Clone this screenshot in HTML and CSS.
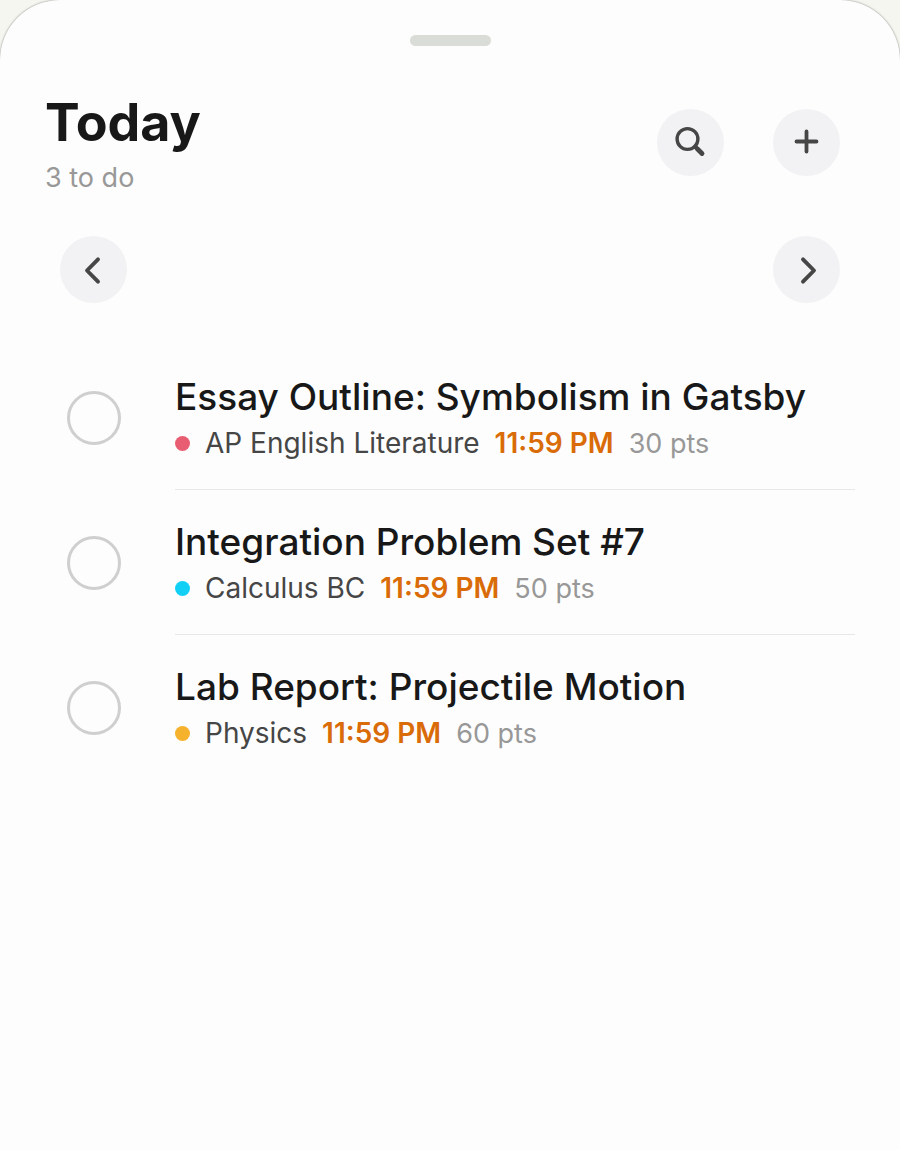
FILE: index.html
```html
<!DOCTYPE html>
<html lang="en">
<head>
    <meta charset="UTF-8">
    <meta name="viewport" content="width=device-width, initial-scale=1.0">
    <title>Today</title>
    <link rel="stylesheet" href="styles.css">
</head>
<body>
    <main class="sheet">
        <div class="grabber"></div>

        <header class="header">
            <div>
                <h1>Today</h1>
                <p class="subtitle">3 to do</p>
            </div>
            <div class="actions">
                <button type="button" class="round-button" aria-label="Search">
                    <svg width="32" height="32" viewBox="0 0 32 32">
                        <circle cx="12.500" cy="13" r="10.400" stroke-width="3.400"/>
                        <path d="M20 20.500l2 2" stroke-width="4"/>
                        <path d="M22.500 23l4.500 4.500" stroke-width="4.800"/>
                    </svg>
                </button>
                <button type="button" class="round-button" aria-label="Add task">
                    <svg width="32" height="32" viewBox="0 0 32 32">
                        <path d="M15.500 5.500v20M5.500 15.500h20" stroke-width="3.800"/>
                    </svg>
                </button>
            </div>
        </header>

        <nav class="day-nav">
            <button type="button" class="round-button" aria-label="Previous day">
                <svg width="32" height="32" viewBox="0 0 32 32">
                    <path d="M20 5.300L9 16.500L20 27.700" stroke-width="3.900"/>
                </svg>
            </button>
            <button type="button" class="round-button" aria-label="Next day">
                <svg width="32" height="32" viewBox="0 0 32 32">
                    <path d="M12 5.300L23 16.500L12 27.700" stroke-width="3.900"/>
                </svg>
            </button>
        </nav>

        <ul class="tasks">
            <li class="task">
                <input type="checkbox" id="task-essay">
                <div class="task-body">
                    <label for="task-essay">Essay Outline: Symbolism in Gatsby</label>
                    <div class="meta">
                        <span class="dot english"></span>
                        <span class="course">AP English Literature</span>
                        <span class="time">11:59 PM</span>
                        <span class="points">30 pts</span>
                    </div>
                </div>
            </li>
            <li class="task">
                <input type="checkbox" id="task-integration">
                <div class="task-body">
                    <label for="task-integration">Integration Problem Set #7</label>
                    <div class="meta">
                        <span class="dot calculus"></span>
                        <span class="course">Calculus BC</span>
                        <span class="time">11:59 PM</span>
                        <span class="points">50 pts</span>
                    </div>
                </div>
            </li>
            <li class="task">
                <input type="checkbox" id="task-lab">
                <div class="task-body">
                    <label for="task-lab">Lab Report: Projectile Motion</label>
                    <div class="meta">
                        <span class="dot physics"></span>
                        <span class="course">Physics</span>
                        <span class="time">11:59 PM</span>
                        <span class="points">60 pts</span>
                    </div>
                </div>
            </li>
        </ul>
    </main>
</body>
</html>
```
FILE: styles.css
```css
* {
    box-sizing: border-box;
}
body {
    margin: 0;
    background: #f6f6f1;
    font-family: Inter, "Liberation Sans", sans-serif;
    color: #181818;
}
.sheet {
    min-height: 100vh;
    padding: 35px 45px 45px;
    background: #fdfdfd;
    border-radius: 60px 60px 0 0;
    box-shadow: 0 0 2px rgba(0, 0, 0, 0.5);
}
.grabber {
    width: 81px;
    height: 11px;
    margin: 0 auto;
    border-radius: 6px;
    background: #dadcd7;
}
.header {
    display: flex;
    justify-content: space-between;
    align-items: center;
    margin-top: 43px;
    padding-right: 15px;
}
h1 {
    margin: 0;
    font-size: 52px;
    font-weight: 700;
    line-height: 68px;
}
.subtitle {
    margin: 4px 0 0;
    font-size: 27px;
    line-height: 34px;
    color: #989898;
}
.actions {
    display: flex;
    gap: 49px;
}
.round-button {
    display: flex;
    align-items: center;
    justify-content: center;
    width: 67px;
    height: 67px;
    padding: 0;
    border: none;
    border-radius: 50%;
    background: #f2f2f4;
    color: #464646;
    cursor: pointer;
}
.round-button svg {
    fill: none;
    stroke: currentColor;
    stroke-linecap: round;
    stroke-linejoin: round;
}
.day-nav {
    display: flex;
    justify-content: space-between;
    margin-top: 41px;
    padding: 0 15px;
}
.tasks {
    margin: 42px 0 0;
    padding: 0;
    list-style: none;
}
.task {
    display: flex;
    align-items: center;
    gap: 54px;
    padding-left: 22px;
}
.task input {
    appearance: none;
    flex: none;
    width: 54px;
    height: 54px;
    margin: 0;
    border: 3px solid #cfcfcf;
    border-radius: 50%;
    cursor: pointer;
}
.task input:checked {
    background: #cfcfcf;
}
.task-body {
    flex: 1;
    padding: 27px 0;
    border-bottom: 1px solid #e8e8e8;
}
.task:last-child .task-body {
    border-color: transparent;
}
.task label {
    display: block;
    font-size: 37px;
    font-weight: 500;
    line-height: 50px;
}
.meta {
    display: flex;
    align-items: center;
    gap: 15px;
    margin-top: 3px;
    font-size: 28px;
    line-height: 37px;
}
.dot {
    width: 15px;
    height: 15px;
    border-radius: 50%;
}
.english {
    background: #e85d72;
}
.calculus {
    background: #12d0f5;
}
.physics {
    background: #f6b12d;
}
.course {
    color: #464646;
}
.time {
    font-weight: 600;
    color: #d96b08;
}
.points {
    font-size: 27px;
    color: #989898;
}
```
